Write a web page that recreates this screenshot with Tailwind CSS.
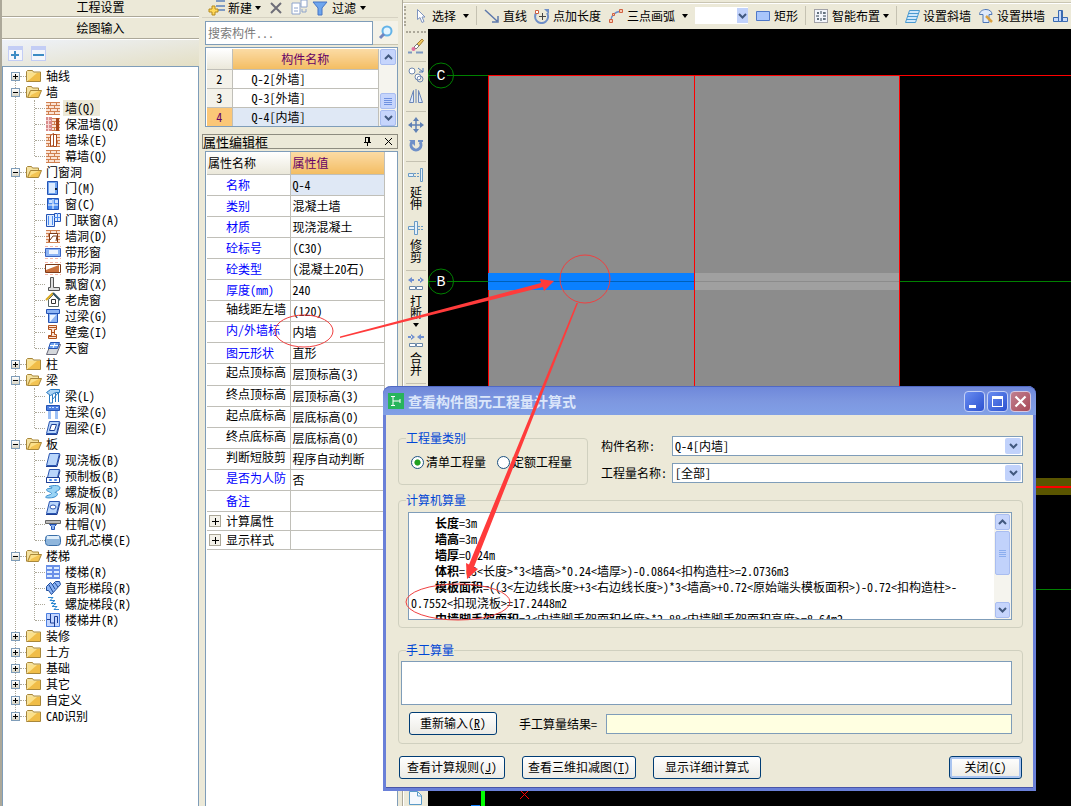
<!doctype html>
<html lang="zh-CN">
<head>
  <meta charset="utf-8" />
  <meta name="viewport" content="width=device-width,initial-scale=1" />
  <title>查看构件图元工程量计算式</title>
  <script src="https://cdn.jsdelivr.net/npm/@tailwindcss/browser@4"></script>
</head>
<body class="relative flex h-screen overflow-hidden bg-[#ece9d8] font-['Noto_Sans_Mono_CJK_SC','Noto_Sans_CJK_SC',sans-serif] text-[12px] leading-4 text-black">

  <!-- navigation -->
  <aside class="flex w-[199px] shrink-0 flex-col border-l-2 border-[#aca899]">
    <button class="h-[17px] border-b border-[#aca899] pb-0.5 leading-[14px]">工程设置</button>
    <button class="h-[22px] border-b border-t border-b-[#aca899] border-t-white">绘图输入</button>
    <div class="flex h-[27px] items-center gap-2 border-t border-white bg-linear-to-br from-[#eef2fa] to-[#e4dfc4] pl-[6px]">
      <button aria-label="全部展开"><svg class="size-[15px]" viewBox="0 0 15 15" shape-rendering="crispEdges"><path fill="#c3cdf5" d="M0 0h15v15H0z"/><path fill="#f4f6fb" d="M1 4h13v10H1z"/><path fill="#3c8cc4" d="M3 8h8v2H3zM6 5h2v8H6z"/></svg></button>
      <button aria-label="全部折叠"><svg class="size-[15px]" viewBox="0 0 15 15" shape-rendering="crispEdges"><path fill="#c3cdf5" d="M0 0h15v15H0z"/><path fill="#f4f6fb" d="M1 4h13v10H1z"/><path fill="#3c8cc4" d="M2 8h11v2H2z"/></svg></button>
    </div>
    <nav class="min-h-0 flex-1 overflow-hidden border border-b-0 border-[#7f9db9] bg-white pt-px">
      <ul id="tree" class="relative"></ul>
    </nav>
  </aside>

  <!-- component list and properties -->
  <section class="ml-[3px] flex w-[196px] shrink-0 flex-col">
    <div class="flex h-[18px] items-center gap-1 border-b border-[#d6d2c2] pb-0.5 pl-[6px] leading-[14px]">
      <button class="flex items-center gap-[3px]">
        <svg class="size-[17px]" viewBox="0 0 17 17"><path d="M8 2h9M8 7h9M8 11h9" stroke="#7f9bc4" stroke-width="2"/><path d="M4 7h3v3h3v3H7v3H4v-3H1v-3h3z" fill="#ffd95a" stroke="#b58a1c"/></svg>
        <span>新建</span>
        <svg class="size-[6px]" viewBox="0 0 6 6"><path d="M0 1h6L3 5z"/></svg>
      </button>
      <button class="ml-1" aria-label="删除"><svg class="size-[14px]" viewBox="0 0 14 14"><path d="M2 2l10 10M12 2L2 12" stroke="#6e6e78" stroke-width="2" /></svg></button>
      <button class="ml-1" aria-label="复制"><svg class="size-[17px]" viewBox="0 0 17 17" fill="#fff" stroke="#8ea4cc"><path d="M1 4h8v11H1zM10 1h6v7h-6z"/><path d="M3 9h4M3 12h4M11 10v3h4v-3" fill="none"/></svg></button>
      <button class="flex items-center gap-1">
        <svg class="size-[16px]" viewBox="0 0 16 16"><path d="M1 2h14l-5 6v7H6V8z" fill="#6da5ee" stroke="#4675c4"/></svg>
        <span>过滤</span>
        <svg class="size-[6px]" viewBox="0 0 6 6"><path d="M0 1h6L3 5z"/></svg>
      </button>
    </div>
    <div class="mt-[3px] flex h-[24px] pl-[3px]">
      <input aria-label="搜索构件" placeholder="搜索构件..." class="min-w-0 flex-1 border border-[#7f9db9] bg-white px-0.5 placeholder:text-[#7a7a7a]" />
      <button aria-label="搜索" class="flex w-[25px] items-center justify-center border-b border-[#c9c5b2] bg-[#f4f2e8]">
        <svg class="size-[15px]" viewBox="0 0 15 15"><circle cx="9" cy="6" r="4.500" fill="#e4f5ff" stroke="#63b3e8" stroke-width="2"/><path d="M6 9l-4 4" stroke="#7284bf" stroke-width="3"/></svg>
      </button>
    </div>

    <div class="ml-[3px] mt-0.5 flex border border-[#7f9db9] bg-white pl-px pt-px">
      <table class="flex-1 border-collapse text-center">
        <thead>
          <tr class="h-[20px]">
            <th class="w-[25px] border border-l-0 border-t-0 border-[#c0bfb8] bg-linear-to-b from-white to-[#ebe8da]"></th>
            <th class="border border-t-0 border-[#c0bfb8] bg-linear-to-b from-[#fbdba4] to-[#f3bd62] font-normal text-[#660066]">构件名称</th>
          </tr>
        </thead>
        <tbody>
          <tr class="h-[19px]"><td class="border border-l-0 border-[#c0bfb8] bg-[#f4f2ea]">2</td><td class="border border-[#c0bfb8] pl-[19px] text-left">Q-2[外墙]</td></tr>
          <tr class="h-[19px]"><td class="border border-l-0 border-[#c0bfb8] bg-[#f4f2ea]">3</td><td class="border border-[#c0bfb8] pl-[19px] text-left">Q-3[外墙]</td></tr>
          <tr class="h-[19px]"><td class="border border-b-0 border-l-0 border-[#c0bfb8] bg-[#fbc777] text-[#660066]">4</td><td class="border border-b-0 border-[#c0bfb8] bg-[#dfe8f5] pl-[19px] text-left">Q-4[内墙]</td></tr>
        </tbody>
      </table>
      <div class="flex w-[18px] flex-col bg-[#f5f4ee] px-px">
        <button aria-label="向上滚动" class="flex h-4 items-center justify-center rounded-xs border border-[#a9bdf0] bg-[#c6d5fc]"><svg class="h-[6px] w-[9px]" viewBox="0 0 9 6"><path d="M1 5l3.500-3.500L8 5" fill="none" stroke="#42597f" stroke-width="2"/></svg></button>
        <div class="mt-auto flex h-4 flex-col items-center justify-center gap-px rounded-xs border border-[#a9bdf0] bg-[#c6d5fc]"><i class="h-px w-2 bg-[#6f91e0]"></i><i class="h-px w-2 bg-[#6f91e0]"></i><i class="h-px w-2 bg-[#6f91e0]"></i><i class="h-px w-2 bg-[#6f91e0]"></i></div>
        <button aria-label="向下滚动" class="mt-px flex h-4 items-center justify-center rounded-xs border border-[#a9bdf0] bg-[#c6d5fc]"><svg class="h-[6px] w-[9px]" viewBox="0 0 9 6"><path d="M1 1l3.500 3.500L8 1" fill="none" stroke="#42597f" stroke-width="2"/></svg></button>
      </div>
    </div>

    <div class="mt-[7px] flex h-[15px] items-center border border-[#8e8c80] pr-1">
      <h2 class="flex-1 text-[13px] leading-3">属性编辑框</h2>
      <button aria-label="固定" class="mr-3"><svg class="size-[9px]" viewBox="0 0 9 9" shape-rendering="crispEdges"><path d="M2 0h5v5h1v1H5v3H4V6H1V5h1zM3 1v4h2V1z" fill-rule="evenodd"/></svg></button>
      <button aria-label="关闭面板"><svg class="size-[9px]" viewBox="0 0 9 9"><path d="M1 1l7 7M8 1L1 8" stroke="#000"/></svg></button>
    </div>
    <div class="ml-[3px] mt-0.5 min-h-0 flex-1 border border-b-0 border-[#7f9db9] bg-white pl-px">
      <table class="w-[178px] table-fixed border-collapse whitespace-nowrap text-left">
        <thead>
          <tr class="h-[22px]">
            <th class="w-[83px] border-b border-r border-[#c0bfb8] bg-linear-to-b from-white to-[#ebe8da] pl-px font-normal">属性名称</th>
            <th class="border-b border-r border-[#c0bfb8] bg-linear-to-b from-[#fbdba4] to-[#f3bd62] pl-0.5 font-normal text-[#660066]">属性值</th>
          </tr>
        </thead>
        <tbody id="props"></tbody>
      </table>
    </div>
  </section>

  <!-- drawing area -->
  <main class="ml-1 flex min-w-0 flex-1 flex-col border-l border-[#aca899]">
    <div class="h-[3px] border-b border-[#c9c5b2]"></div>
    <div id="toolbar" class="flex h-[26px] items-center gap-[7px] overflow-hidden whitespace-nowrap border-l border-t border-white pb-0.5">
      <i class="h-5 w-0 border-l-2 border-dotted border-[#aca899]"></i>
    </div>
    <div class="flex min-h-0 flex-1">
      <div id="strip" class="flex w-[25px] shrink-0 flex-col items-center gap-[5px] overflow-hidden border-l border-white pt-0.5">
        <i class="h-0 w-5 border-t-2 border-dotted border-[#aca899]"></i>
      </div>
      <svg class="h-full min-w-0 flex-1 bg-black" shape-rendering="crispEdges">
        <g transform="translate(-428 -29)">
          <path d="M428 75h60v1h-60zM428 281h60v1h-60zM899 281h700v1h-700zM1000 589h600v1h-600z" fill="#008000"/>
          <path d="M488 76h411v400H488z" fill="#8c8c8c"/>
          <path d="M694 273h205v17H694z" fill="#a0a0a0"/>
          <path d="M694 281h205v1H694z" fill="#8c8c8c"/>
          <path d="M488 273h206v17H488z" fill="#0a80ff"/>
          <path d="M488 281h206v1H488z" fill="#0060b8"/>
          <path d="M488 75h1100v1H488zM488 76h1v197h-1zM488 290h1v180h-1zM694 76h1v400h-1zM899 76h1v400h-1z" fill="#f00"/>
          <path d="M1000 478h600v17h-600z" fill="#5a5500"/>
          <path d="M1000 486h600v2h-600z" fill="#f00"/>
          <path d="M481 700h4v106h-4z" fill="#0f0"/>
          <path d="M471 805h9v1h-9z" fill="#1080ff"/>
          <path d="M520 790l9 9M528 791l-8 8" stroke="#f00"/>
          <g fill="#000" stroke="#008000" shape-rendering="auto"><circle cx="441" cy="75.500" r="12.500"/><circle cx="441" cy="281.500" r="12.500"/></g>
          <path d="M428 75h8v1h-8zM447 75h7v1h-7zM428 281h8v1h-8zM447 281h7v1h-7z" fill="#008000"/>
          <g fill="#fff" font-family="Liberation Mono, monospace" font-size="15" text-anchor="middle"><text x="441" y="80">C</text><text x="441" y="286">B</text></g>
        </g>
      </svg>
    </div>
  </main>

  <!-- calculation dialog -->
  <div role="dialog" aria-labelledby="dlg-title" class="absolute left-[383px] top-[386px] w-[653px] rounded-t-lg border-3 border-t-0 border-[#6a80d8] bg-[#ece9d8] shadow-[inset_0_-1px_0_#4a55a8]">
    <header class="-mx-[3px] flex h-[29px] items-center rounded-t-lg border-t border-[#5068c4] bg-linear-to-b from-[#6f88da] via-[#7d97e0] to-[#81a0e6] pl-[5px] pr-[5px]">
      <svg class="size-4" viewBox="0 0 16 16"><path d="M0 0h16v16H0z" fill="#28b45c"/><path d="M3 3.500h4M3 12.500h4M5 3v10M5 8h7M12 6v4" stroke="#fff" fill="none"/></svg>
      <h1 id="dlg-title" class="flex-1 pl-1 text-[14px] font-bold text-[#dbe6fa]">查看构件图元工程量计算式</h1>
      <div class="flex gap-0.5">
        <button aria-label="最小化" class="size-[21px] rounded-sm border border-[#c5d1f6] bg-linear-to-br from-[#6a8cf0] to-[#2c50d0]"><svg viewBox="0 0 19 19"><path d="M4 13h7v3H4z" fill="#fff"/></svg></button>
        <button aria-label="最大化" class="size-[21px] rounded-sm border border-[#c5d1f6] bg-linear-to-br from-[#6a8cf0] to-[#2c50d0]"><svg viewBox="0 0 19 19"><path d="M4 4h11v11H4zM5 7v7h9V7z" fill="#fff" fill-rule="evenodd"/></svg></button>
        <button aria-label="关闭" class="size-[21px] rounded-sm border border-[#d6c8e0] bg-linear-to-br from-[#c08090] to-[#a84858]"><svg viewBox="0 0 19 19"><path d="M4.500 4.500l10 10M14.500 4.500l-10 10" stroke="#fff" stroke-width="2.200"/></svg></button>
      </div>
    </header>

    <form class="pb-[9px] pl-3 pr-[10px] pt-[15px]">
      <div class="flex gap-[13px]">
        <fieldset class="h-[55px] w-[190px] rounded-sm border border-[#d0d0bf] pl-3">
          <legend class="-ml-[5px] h-4 bg-[#ece9d8] text-[#0046d5]">工程量类别</legend>
          <div class="flex gap-[11px] pt-2">
            <label class="flex items-center gap-0.5"><input type="radio" name="kind" checked class="size-[13px] appearance-none rounded-full border border-[#1c5180] bg-white checked:bg-radial checked:from-[#21a121] checked:from-35% checked:to-white checked:to-45%" />清单工程量</label>
            <label class="flex items-center gap-0.5"><input type="radio" name="kind" class="size-[13px] appearance-none rounded-full border border-[#1c5180] bg-white checked:bg-radial checked:from-[#21a121] checked:from-35% checked:to-white checked:to-45%" />定额工程量</label>
          </div>
        </fieldset>
        <div class="grid flex-1 grid-cols-[71px_1fr] content-start items-center gap-y-[7px] pt-[6px]">
          <label for="comp">构件名称:</label>
          <div class="relative">
            <select id="comp" class="block h-[20px] w-full appearance-none border border-[#7f9db9] bg-white px-0.5"><option>Q-4[内墙]</option></select>
            <span class="pointer-events-none absolute right-0.5 top-0.5 flex size-4 items-center justify-center rounded-xs bg-[#c1d2fb]"><svg class="h-[6px] w-[9px]" viewBox="0 0 9 6"><path d="M1 1l3.500 3.500L8 1" fill="none" stroke="#42597f" stroke-width="2"/></svg></span>
          </div>
          <label for="qty">工程量名称:</label>
          <div class="relative">
            <select id="qty" class="block h-[20px] w-full appearance-none border border-[#7f9db9] bg-white px-0.5"><option>[全部]</option></select>
            <span class="pointer-events-none absolute right-0.5 top-0.5 flex size-4 items-center justify-center rounded-xs bg-[#c1d2fb]"><svg class="h-[6px] w-[9px]" viewBox="0 0 9 6"><path d="M1 1l3.500 3.500L8 1" fill="none" stroke="#42597f" stroke-width="2"/></svg></span>
          </div>
        </div>
      </div>

      <fieldset class="mt-[7px] rounded-sm border border-[#d0d0bf] pb-[7px] pl-[9px] pr-[10px]">
        <legend class="-ml-0.5 h-4 bg-[#ece9d8] text-[#0046d5]">计算机算量</legend>
        <div class="mt-1 flex h-[108px] border border-[#7f9db9] bg-white">
          <div class="min-w-0 flex-1 overflow-hidden whitespace-nowrap pl-0.5 pt-0.5 indent-6">
            <p><b>长度</b>=3m</p>
            <p><b>墙高</b>=3m</p>
            <p><b>墙厚</b>=0.24m</p>
            <p><b>体积</b>=(3&lt;长度&gt;*3&lt;墙高&gt;*0.24&lt;墙厚&gt;)-0.0864&lt;扣构造柱&gt;=2.0736m3</p>
            <p><b>模板面积</b>=((3&lt;左边线长度&gt;+3&lt;右边线长度&gt;)*3&lt;墙高&gt;+0.72&lt;原始端头模板面积&gt;)-0.72&lt;扣构造柱&gt;-<br>0.7552&lt;扣现浇板&gt;=17.2448m2</p>
            <p><b>内墙脚手架面积</b>=3&lt;内墙脚手架面积长度&gt;*2.88&lt;内墙脚手架面积高度&gt;=8.64m2</p>
          </div>
          <div class="flex w-[17px] flex-col bg-[#f5f4ee] p-px">
            <button type="button" aria-label="向上滚动" class="flex h-4 items-center justify-center rounded-xs border border-[#a9bdf0] bg-[#c6d5fc]"><svg class="h-[6px] w-[9px]" viewBox="0 0 9 6"><path d="M1 5l3.500-3.500L8 5" fill="none" stroke="#42597f" stroke-width="2"/></svg></button>
            <div class="mt-px flex h-11 flex-col items-center justify-center gap-px rounded-xs border border-[#a9bdf0] bg-[#c1d2fb]"><i class="h-px w-[7px] bg-[#8caeee]"></i><i class="h-px w-[7px] bg-[#8caeee]"></i><i class="h-px w-[7px] bg-[#8caeee]"></i><i class="h-px w-[7px] bg-[#8caeee]"></i></div>
            <button type="button" aria-label="向下滚动" class="mt-auto flex h-4 items-center justify-center rounded-xs border border-[#a9bdf0] bg-[#c6d5fc]"><svg class="h-[6px] w-[9px]" viewBox="0 0 9 6"><path d="M1 1l3.500 3.500L8 1" fill="none" stroke="#42597f" stroke-width="2"/></svg></button>
          </div>
        </div>
      </fieldset>

      <fieldset class="mt-[14px] rounded-sm border border-[#d0d0bf] pb-2 pl-0.5 pr-[10px]">
        <legend class="ml-[5px] h-4 bg-[#ece9d8] text-[#0046d5]">手工算量</legend>
        <textarea aria-label="手工算量" class="mt-[3px] block h-11 w-full resize-none border border-[#7f9db9] bg-white"></textarea>
        <div class="mt-[7px] flex items-center pl-2">
          <button type="button" class="h-[23px] w-[88px] rounded-[3px] border border-[#003c74] bg-linear-to-b from-white to-[#ecebe5] pb-0.5">重新输入(<u>R</u>)</button>
          <label for="result" class="ml-[22px] w-[87px]">手工算量结果=</label>
          <input id="result" class="h-[20px] min-w-0 flex-1 border border-[#7f9db9] bg-[#ffffe1]" />
        </div>
      </fieldset>

      <div class="mt-3 flex gap-[17px] whitespace-nowrap px-px">
        <button type="button" class="h-[23px] w-[106px] rounded-[3px] border border-[#003c74] bg-linear-to-b from-white to-[#ecebe5] pb-0.5">查看计算规则(<u>J</u>)</button>
        <button type="button" class="h-[23px] w-[114px] rounded-[3px] border border-[#003c74] bg-linear-to-b from-white to-[#ecebe5] pb-0.5">查看三维扣减图(<u>T</u>)</button>
        <button type="button" class="h-[23px] w-[108px] rounded-[3px] border border-[#003c74] bg-linear-to-b from-white to-[#ecebe5] pb-0.5">显示详细计算式</button>
        <button type="button" class="ml-auto h-[23px] w-[73px] rounded-[3px] border border-[#003c74] bg-linear-to-b from-white to-[#ecebe5] pb-0.5 inset-ring-2 inset-ring-[#a9c4f0]">关闭(<u>C</u>)</button>
      </div>
    </form>
  </div>

  <!-- red pen marks -->
  <svg class="pointer-events-none absolute left-0 top-0 h-[806px] w-[1071px]" viewBox="0 0 1071 806" fill="none" stroke="#f04040">
    <ellipse cx="304" cy="331" rx="29" ry="16"/>
    <ellipse cx="585" cy="279" rx="25" ry="24"/>
    <ellipse cx="458" cy="602" rx="52" ry="18"/>
    <g fill="#ff3b3b" stroke="none">
      <path d="M340 336.500L541 283l-1-4 14 2-10 10-1-4L340 338z"/>
      <path d="M576.500 303h1.500L474 567l4 2-11 10-1-16 3 1.500z"/>
    </g>
  </svg>

  <script>
    // 图标，16x16
    const brick = '<path fill="#fbe3d4" d="M1 2h14v12H1z"/><path stroke="#d08050" d="M1 2.500h14M1 5.500h14M1 8.500h14M1 11.500h14M1 14.500h14M5.500 3v2M11.500 3v2M3.500 6v2M9.500 6v2M5.500 9v2M12.500 9v2M3.500 12v2M9.500 12v2"/>';
    const slab = '<path fill="#b9d6fb" stroke="#2a55b0" d="M4.500 1.500h10l-3 12h-10z"/><path stroke="#1d3f95" d="M1 14.500h11l3-12"/>';
    const icons = {
      wall: brick,
      warm: brick + '<path fill="#d98c8c" d="M1 1h6v14H1z"/><path stroke="#f8d4d4" d="M1 4.500h5M1 8.500h5M1 12.500h5M3.500 1v14"/><path fill="#a8481c" d="M11 2h3v13h-3z"/>',
      pier: brick + '<path fill="#fff" stroke="#a8481c" d="M5.500 3.500l3-2v12l-3 1zM8.500 2.500h3v12h-3z"/>',
      door: '<path fill="#6fa4ef" stroke="#2453b4" d="M2.500 1.500h10v13h-10z"/><path fill="#dcebff" d="M4 3h6v10H4z"/><path fill="#123" d="M10 8h2v2h-2z"/>',
      win: '<path fill="#4c8cf0" stroke="#2453b4" d="M2.500 2.500h11v11h-11z"/><path stroke="#fff" d="M8 3v10M3 9h10"/><path fill="#cfe2ff" d="M4 4h3v3H4zM10 4h3v3h-3z"/>',
      dwin: '<path fill="#dcebff" stroke="#2453b4" d="M1.500 2.500h8v12h-8zM9.500 1.500h6v8h-6z"/><path stroke="#4c8cf0" d="M3.500 4v9M12.500 1v8M9 5.500h6M7.500 4v9"/>',
      hole: brick + '<path fill="#fff" stroke="#7c3a18" d="M4.500 14V5.500h8V14M5 12l3-4h4l-1 5"/>',
      band: '<path fill="#8db4f4" stroke="#3a62c0" d="M.5 4.500h15v8H.5z"/><path fill="#edf4ff" d="M4 6h9v4H4z"/><path stroke="#f4b6a8" stroke-dasharray="3 2" d="M0 2.500h16M0 14.500h16"/>',
      bhole: '<path fill="#fff" stroke="#7c3a18" d="M.5 4.500h15v8H.5z"/><path fill="#c9703c" d="M1 10l13-5v7H1z"/><path stroke="#f4b6a8" stroke-dasharray="3 2" d="M0 2.500h16M0 14.500h16"/>',
      bay: '<path fill="#ddd" stroke="#555" d="M5.500 1.500h3v10h6v3h-11v-3h2z"/>',
      dorm: '<path fill="#fff" stroke="#566" d="M3.500 7.500v7h10v-7l-5-5z"/><path stroke="#d8a820" stroke-width="2" d="M1 8l7-7"/><path stroke="#356" stroke-width="2" d="M8 1l7 7"/><path stroke="#333" d="M6.500 7.500h4v4h-4z"/>',
      lintel: '<path fill="#8db4f4" stroke="#2453b4" d="M1.500 1.500h13v4h-13zM3.500 5.500h9v9h-9z"/><path fill="#edf4ff" d="M5 7h6l-6 7z"/>',
      niche: '<path fill="#fbe3d4" stroke="#b0501c" d="M3.500 1.500h8v4h-2v5h2v4h-8v-3h3v-6h-3z"/><path stroke="#b0501c" d="M4 3.500h7M6.500 8.500h3M4 12.500h7"/>',
      sky: '<path fill="#d5d8dc" stroke="#667" d="M5.500 4.500h10l-4 10h-10z"/><path fill="#6fa4ef" stroke="#2453b4" d="M5.500 2.500h9l-2 6h-9z"/><path stroke="#fff" d="M10 3l-2 5M5 5.500h8"/>',
      beam: '<path fill="#a9d3f5" stroke="#2a7ac0" d="M1.500 4.500l4-3h9v3h-4l-5 3z"/><path stroke="#2a7ac0" d="M4.500 7v8h3V7M10.500 5v9M13.500 5v9M7 12l6-7"/>',
      lbeam: '<path fill="#4c7fe0" stroke="#2453b4" d="M1.500 1.500h13v5h-13z"/><path fill="#9cc0f6" d="M3 7h3v8H3zM10 7h3v8h-3z"/><path stroke="#cfe2ff" d="M4 3.500h2M7 3.500h2M11 3.500h2"/>',
      ring: slab + '<path fill="#fff" stroke="#1d3f95" d="M6.500 4.500h5l-2 6h-5z"/>',
      slab: slab,
      pre: slab + '<path fill="#fff" stroke="#1d3f95" d="M1.500 9.500h13v5h-13z"/><path stroke="#4c8cf0" d="M4.500 11.500h2v1h-2zM9.500 11.500h2v1h-2z"/>',
      spiral: '<path fill="#9ad4f5" stroke="#3a8fd0" d="M4 2.500C9 1 15 1 15 4s-5 3-5 4.500c4 0 3 4-2 5-4 .7-7 .5-7.500-.5 1-2 6-2 6-3.500C6.500 8 1 7.500 1.500 5.500 2 4 6 5 7 4 7.500 3 5 3 4 2.500z"/>',
      shole: slab + '<ellipse cx="8" cy="7" rx="3" ry="2" fill="#fff" stroke="#2a55b0"/>',
      cap: '<path fill="#bbb" stroke="#666" d="M.5 4.500h15v3H.5z"/><path fill="#8db4f4" stroke="#2453b4" d="M4.500 8.500h7l-2 2v3h-3v-3z"/>',
      core: '<rect x=".5" y="3.500" width="15" height="10" rx="3" fill="#8fb6dc" stroke="#3a6ea8"/><path fill="#dfeefa" d="M2 4h12v3H2z"/>',
      stair: '<path fill="#6a90e8" d="M1 1h14v14H1z"/><path stroke="#dcebff" stroke-width="2" d="M2 4h5M9 4h5M2 8h5M9 8h5M2 12h5M9 12h5"/>',
      flight: '<path fill="#8db4f4" stroke="#1d4a9a" d="M1.500 6.500l4-4 2 2 3-3h4l1 3-9 10-3-4h-2z"/><path stroke="#1d4a9a" d="M4 5l4 7M7 4l3 5M10 3l3 4"/>',
      helix: '<path stroke="#2a86d0" d="M3 1.500h5L5 4.500h5l-4 3h5l-4 3h5l-3 3h5"/>',
      well: '<path fill="#c4d6ff" stroke="#4c7fe0" d="M1.500 1.500h13v13h-13z"/><path stroke="#1d3f95" d="M5.500 2v9h4V4.500h3V11M2 7.500h3M9.500 11v4"/>',
      folder: '<path fill="#f5e2a0" stroke="#a8873a" d="M.5 12.500v-9l1-1h5l1 1.500h7v9.500H.5z"/><path fill="#f0bd48" d="M2 5h12v8H2z"/><path fill="#fbe08a" d="M2 5h9L3 12H2z"/>',
      open: '<path fill="#f5e2a0" stroke="#a8873a" d="M.5 13.500v-10l1-1h4l1 1.500h6v3"/><path fill="#f3c453" stroke="#a8873a" d="M1.500 13.500l3-7h11l-3 7z"/><path fill="#fbe08a" d="M5 7h8l-8 4-1 2H3z"/>',
      cursor: '<path fill="#fff" stroke="#7d93c0" d="M4.500 1.500v10l2.500-2 2 5 2-1-2-4.500h3z"/>',
      line: '<path stroke="#5e79ac" stroke-width="1.500" d="M1 2l12 11M14 8v6H8"/>',
      len: '<path stroke="#6f8fc8" stroke-width="2" d="M3 4a6.500 6.500 0 1 0 10 1"/><path stroke="#444" d="M8.500 5v7M5 8.500h7"/><path fill="#fff" stroke="#d06040" d="M1.500 2.500h3v3h-3z"/><path fill="#6f8fc8" d="M10 1h5v5z"/>',
      arc: '<path stroke="#6f8fc8" stroke-width="1.500" d="M3 13C3 7 7 4 13 3"/><path fill="#f8c8b0" stroke="#d06040" d="M1.500 11.500h3v3h-3zM4.500 5.500h2v2h-2zM11.500 1.500h3v3h-3z"/>',
      rect: '<path fill="#a9c6fb" stroke="#4f78c8" d="M1.500 3.500h13v9h-13z"/>',
      smart: '<path fill="#f2f5fb" stroke="#556" stroke-dasharray="1 1" d="M1.500 1.500h13v13h-13z"/><path stroke="#345" d="M8 3v3M8 10v3M3 8h3M10 8h3M4 5h2M10 5h3M4 11h2M10 11h3M5 4v2M11 4v2M5 10v2M11 10v2"/>',
      slant: '<path fill="#cfe8fb" stroke="#4a9ad0" d="M5.500 2.500h10l-4 12h-10z"/><path stroke="#4a9ad0" d="M5 5.500h9M4 8.500h9M3 11.500h9"/>',
      arch: '<path fill="#dfeafb" stroke="#4f78b8" d="M1.500 6.500c0-3 3-5 6.500-5s6 2 6 5h-3v8h-6v-8z"/><path stroke="#d8a040" stroke-width="2.500" d="M8 8l6 6"/>',
      mass: '<path fill="#c8dafa" stroke="#3a6ab0" d="M6.500 2.500h4v11h-4zM1.500 9.500h5v4h-5zM10.500 9.500h5v4h-5z"/><path fill="#3a6ab0" d="M9 3h2v10H9z"/>',
      erase: '<path fill="#f0c860" stroke="#a88030" d="M9 6l5-5 1.500 1.500L11 8z"/><path fill="#fff" stroke="#777" d="M6 9l3-3 2 2-3 3z"/><circle cx="5.500" cy="11" r="2" fill="#e070a0"/><path stroke="#7d98c0" stroke-width="2" d="M0 14.500h4M8 14.500h7"/>',
      copy: '<circle cx="4" cy="4" r="3" fill="#fff" stroke="#7088b0"/><circle cx="10" cy="10" r="3" fill="#fff" stroke="#7088b0"/><circle cx="12" cy="12" r="3" stroke="#7088b0"/><path stroke="#4f78b8" d="M10 1l5 4M15 1v4h-4"/>',
      mirror: '<path fill="#dfeafb" stroke="#6a86b8" d="M1.500 14.500l4-12v12zM14.500 14.500l-4-12v12z"/><path stroke="#6a86b8" d="M8 1v14"/>',
      move: '<path stroke="#5f80b4" stroke-width="1.500" d="M8 2v12M2 8h12"/><path fill="#5f80b4" d="M8 0l3 4H5zM8 16l3-4H5zM0 8l4-3v6zM16 8l-4-3v6z"/>',
      rot: '<path stroke="#6f90c8" stroke-width="3" d="M4 4a5 5 0 1 0 8 0"/><path fill="#6f90c8" d="M1 2h6v6zM10 2h5v2h-5z"/>',
      ext: '<path fill="#e4f0fb" stroke="#6a9ac4" d="M.5 6.500h5v3h-5zM12.500 1.500h2v13h-2z"/><path stroke="#6a9ac4" stroke-dasharray="2 1" d="M6 6.500h6M6 9.500h6"/>',
      trim: '<path fill="#e4f0fb" stroke="#6a9ac4" d="M6.500 1.500h3v13h-3zM.5 6.500h6v3h-6z"/><path stroke="#6a9ac4" stroke-dasharray="2 1" d="M10 6.500h6M10 9.500h6"/>',
      brk: '<path fill="#7090d0" d="M0 4l4-3v6zM16 4l-4-3v6zM3 3h3v2H3zM10 3h3v2h-3z"/><path fill="#fff" stroke="#6a88a8" d="M1.500 10.500h6v3h-6zM8.500 10.500h6v3h-6z"/>',
      merge: '<path fill="#7090d0" d="M7 4L3 1v6zM9 4l4-3v6zM0 3h4v2H0zM12 3h4v2h-4z"/><path fill="#fff" stroke="#6a88a8" d="M1.500 10.500h6v3h-6zM8.500 10.500h6v3h-6z"/>',
      page: '<path fill="#f4f8fd" stroke="#5a9ac8" d="M1.500 1.500h8l4 4v9h-12z"/><path stroke="#5a9ac8" d="M9.500 2v4h4"/>',
    };
    const icon = n => `<svg class="size-4 shrink-0" viewBox="0 0 16 16" fill="none">${icons[n]}</svg>`;
    const caret = '<svg class="size-[6px] shrink-0" viewBox="0 0 6 6"><path d="M0 1h6L3 5z"/></svg>';

    // 构件树
    const tree = [
      ['轴线'],
      ['墙', [['wall', '墙(Q)'], ['warm', '保温墙(Q)'], ['pier', '墙垛(E)'], ['wall', '幕墙(Q)']]],
      ['门窗洞', [['door', '门(M)'], ['win', '窗(C)'], ['dwin', '门联窗(A)'], ['hole', '墙洞(D)'], ['band', '带形窗'], ['bhole', '带形洞'], ['bay', '飘窗(X)'], ['dorm', '老虎窗'], ['lintel', '过梁(G)'], ['niche', '壁龛(I)'], ['sky', '天窗']]],
      ['柱'],
      ['梁', [['beam', '梁(L)'], ['lbeam', '连梁(G)'], ['ring', '圈梁(E)']]],
      ['板', [['slab', '现浇板(B)'], ['pre', '预制板(B)'], ['spiral', '螺旋板(B)'], ['shole', '板洞(N)'], ['cap', '柱帽(V)'], ['core', '成孔芯模(E)']]],
      ['楼梯', [['stair', '楼梯(R)'], ['flight', '直形梯段(R)'], ['helix', '螺旋梯段(R)'], ['well', '楼梯井(R)']]],
      ['装修'], ['土方'], ['基础'], ['其它'], ['自定义'], ['CAD识别'],
    ];
    document.getElementById('tree').innerHTML =
      '<li class="absolute bottom-2 left-[12px] top-2 border-l border-dotted border-[#aca899]"></li>' +
      tree.map(([name, kids]) => `
      <li>
        <div class="flex h-4 items-center pl-2">
          <button aria-label="${kids ? '折叠' : '展开'}" class="relative size-[9px] border border-[#7f9db9] bg-linear-to-b from-white to-[#d8d4c4]">
            <svg class="block size-[7px]" viewBox="0 0 7 7" shape-rendering="crispEdges"><path d="${kids ? 'M1 3h5v1H1z' : 'M1 3h5v1H1zM3 1h1v5H3z'}"/></svg>
          </button>
          <i class="w-[6px] border-t border-dotted border-[#aca899]"></i>
          ${icon(kids ? 'open' : 'folder')}
          <span class="pl-1">${name}</span>
        </div>
        ${kids ? `<ul class="relative">
          <li class="absolute bottom-2 left-[31px] top-0 border-l border-dotted border-[#aca899]"></li>
          ${kids.map(([ic, text]) => `
          <li class="flex h-4 items-center pl-8">
            <i class="w-[10px] border-t border-dotted border-[#aca899]"></i>
            ${icon(ic)}
            <a href="#" class="ml-0.5 px-0.5 ${text === '墙(Q)' ? 'bg-[#ece9d8] pr-[5px]' : ''}">${text}</a>
          </li>`).join('')}
        </ul>` : ''}
      </li>`).join('');

    // 属性：名称, 值, 是否公有(蓝色)
    const props = [
      ['名称', 'Q-4', 1], ['类别', '混凝土墙', 1], ['材质', '现浇混凝土', 1], ['砼标号', '(C30)', 1],
      ['砼类型', '(混凝土20石)', 1], ['厚度(mm)', '240', 1], ['轴线距左墙', '(120)', 0], ['内/外墙标', '内墙', 1],
      ['图元形状', '直形', 1], ['起点顶标高', '层顶标高(3)', 0], ['终点顶标高', '层顶标高(3)', 0],
      ['起点底标高', '层底标高(0)', 0], ['终点底标高', '层底标高(0)', 0], ['判断短肢剪', '程序自动判断', 0],
      ['是否为人防', '否', 1], ['备注', '', 1],
    ];
    document.getElementById('props').innerHTML =
      props.map(([k, v, blue], i) => `
      <tr class="${i === 9 ? 'h-[22px]' : 'h-[21px]'}">
        <td class="border-b border-r border-[#c0bfb8] pl-[19px] ${k.length > 4 && k !== '厚度(mm)' ? 'pb-1 leading-4' : ''} ${blue ? 'text-[#0000ff]' : ''}">${k}</td>
        <td class="border-b border-r border-[#c0bfb8] pl-0.5 ${i === 0 ? 'bg-[#dfe8f5]' : ''}">${v}</td>
      </tr>`).join('') +
      ['计算属性', '显示样式'].map(k => `
      <tr class="h-[19px]">
        <td class="border-b border-r border-[#c0bfb8] pl-0.5"><span class="flex items-center gap-[5px]"><button aria-label="展开${k}" class="size-3 border border-[#aca899] bg-[#f4f2ea]"><svg class="block size-[10px]" viewBox="0 0 10 10" shape-rendering="crispEdges"><path d="M2 5h7v1H2zM5 2h1v7H5z"/></svg></button>${k}</span></td>
        <td class="border-b border-r border-[#c0bfb8]"></td>
      </tr>`).join('');

    // 绘图工具栏
    const sep = '<i class="h-[19px] w-px shrink-0 bg-[#c5c2b2]"></i>';
    const tool = (ic, text, pad) => `<button class="flex shrink-0 items-center gap-[3px]">${icon(ic)}<span>${text}</span>${pad !== undefined ? `<span class="${pad}">${caret}</span>` : ''}</button>`;
    document.getElementById('toolbar').insertAdjacentHTML('beforeend', [
      tool('cursor', '选择', 'pl-1'), sep, tool('line', '直线'), tool('len', '点加长度'), tool('arc', '三点画弧', 'pl-1'),
      `<span class="relative shrink-0">
        <select aria-label="画弧方式" class="block h-[17px] w-[53px] appearance-none bg-white"></select>
        <span class="pointer-events-none absolute right-0 top-px flex h-[15px] w-[11px] items-center justify-center bg-[#c1d2fb]"><svg class="h-[6px] w-[9px]" viewBox="0 0 9 6"><path d="M1 1l3.500 3.500L8 1" fill="none" stroke="#42597f" stroke-width="2"/></svg></span>
      </span>`,
      tool('rect', '矩形'), sep, tool('smart', '智能布置', ''), sep, tool('slant', '设置斜墙'), tool('arch', '设置拱墙'), tool('mass', '墙'),
    ].join(''));

    // 修改工具栏
    const hsep = '<i class="mt-0.5 h-px w-5 shrink-0 bg-[#c5c2b2]"></i>';
    const vtool = (ic, label) => `<button class="shrink-0" aria-label="${label}">${icon(ic)}</button>`;
    const vtext = (ic, text, drop) => `<button class="flex shrink-0 flex-col items-center gap-[3px]">${icon(ic)}<span class="w-3 whitespace-normal leading-3">${text}</span>${drop ? caret : ''}</button>`;
    document.getElementById('strip').insertAdjacentHTML('beforeend', [
      vtool('erase', '删除'), hsep, vtool('copy', '复制'), vtool('mirror', '镜像'), hsep, vtool('move', '移动'), vtool('rot', '旋转'), hsep,
      vtext('ext', '延伸'), '<i></i>', vtext('trim', '修剪'), hsep, vtext('brk', '打断', 1), vtext('merge', '合并'), hsep,
      `<button class="mt-auto shrink-0" aria-label="新建页">${icon('page')}</button>`,
    ].join(''));
  </script>
</body>
</html>
